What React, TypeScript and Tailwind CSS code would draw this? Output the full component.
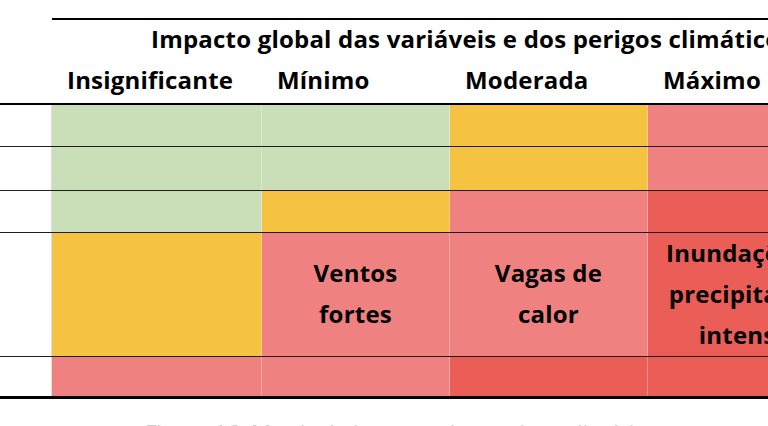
const G = 'bg-[#cadfb8]'
const Y = 'bg-[#f5c242]'
const P = 'bg-[#ef8280]'
const R = 'bg-[#eb5e57]'

type Row = { h: string; cells: { bg: string; lines?: string[] }[] }

const rows: Row[] = [
  { h: 'h-[42px]', cells: [{ bg: G }, { bg: G }, { bg: Y }, { bg: P }] },
  { h: 'h-[44px]', cells: [{ bg: G }, { bg: G }, { bg: Y }, { bg: P }] },
  { h: 'h-[42px]', cells: [{ bg: G }, { bg: Y }, { bg: P }, { bg: R }] },
  {
    h: 'h-[124px]',
    cells: [
      { bg: Y },
      { bg: P, lines: ['Ventos', 'fortes'] },
      { bg: P, lines: ['Vagas de', 'calor'] },
      { bg: R, lines: ['Inundações /', 'precipitação', 'intensa'] },
    ],
  },
  { h: 'h-[42px]', cells: [{ bg: P }, { bg: P }, { bg: R }, { bg: R }] },
]

const headers = ['Insignificante', 'Mínimo', 'Moderada', 'Máximo']

export default function App() {
  return (
    <div
      className="w-[768px] h-[426px] overflow-hidden bg-white text-black"
      style={{ fontFamily: '"Open Sans", "Noto Sans", sans-serif' }}
    >
      <div className="w-[860px] pt-[18px]">
        {/* Header */}
        <div className="ml-[52px] border-t-2 border-black">
          <div className="h-[40px] flex items-center pl-[99px] pb-[2px] text-[24px] font-bold whitespace-nowrap tracking-[0.2px]">
            Impacto global das variáveis e dos perigos climáticos
          </div>
          <div className="h-[43px] grid grid-cols-[210px_188px_198px_212px] items-center pb-[4px] text-[24px] font-bold whitespace-nowrap tracking-[0.2px]">
            {headers.map((h) => (
              <div key={h} className="pl-[15px]">
                {h}
              </div>
            ))}
          </div>
        </div>
        <div className="h-[2px] bg-black" />

        {/* Matrix */}
        {rows.map((row, i) => (
          <div
            key={i}
            className={`${row.h} grid grid-cols-[52px_210px_188px_198px_194px] grid-rows-[minmax(0,1fr)] ${
              i === rows.length - 1 ? 'border-b-[3px] border-black' : 'border-b border-[#1f1f1f]'
            }`}
          >
            <div className="bg-white border-r border-[#dcdcdc]" />
            {row.cells.map((c, j) => (
              <div
                key={j}
                className={`${c.bg} min-h-0 border-r border-white/30 flex flex-col items-center justify-center pb-[3px] text-[24px] font-bold leading-[41px] tracking-[0.2px] whitespace-nowrap`}
              >
                {c.lines?.map((l) => <span key={l}>{l}</span>)}
              </div>
            ))}
          </div>
        ))}

        {/* Caption (cut off) */}
        <div className="pt-[22px] pl-[145px] text-[22px] leading-none text-[#c9c9d3] whitespace-nowrap">
          Figura 16: Matriz de impacto dos perigos climáticos
        </div>
      </div>
    </div>
  )
}
